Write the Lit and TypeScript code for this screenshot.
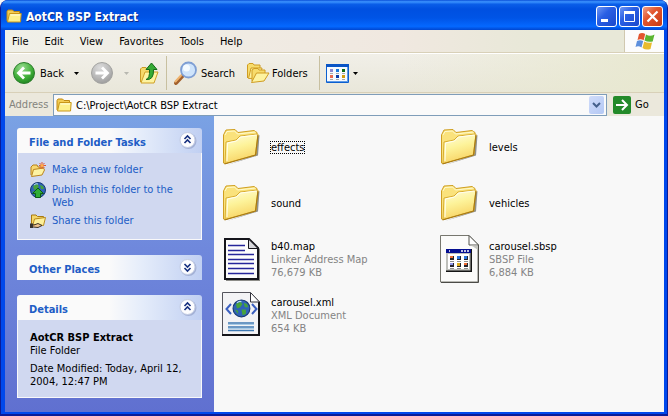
import { LitElement, html, svg, css, nothing } from "lit";
import { customElement, property } from "lit/decorators.js";
import { classMap } from "lit/directives/class-map.js";

type Entry = { name: string; icon: string; lines: string[]; focused?: boolean };

const entries: Entry[] = [
  { name: "effects", icon: "folder", lines: [], focused: true },
  { name: "levels", icon: "folder", lines: [] },
  { name: "sound", icon: "folder", lines: [] },
  { name: "vehicles", icon: "folder", lines: [] },
  { name: "b40.map", icon: "map", lines: ["Linker Address Map", "76,679 KB"] },
  { name: "carousel.sbsp", icon: "program", lines: ["SBSP File", "6,884 KB"] },
  { name: "carousel.xml", icon: "xml", lines: ["XML Document", "654 KB"] },
];

const tasks = [
  { label: "Make a new folder", icon: "new" },
  { label: "Publish this folder to the Web", icon: "publish" },
  { label: "Share this folder", icon: "share" },
];

const menus = ["File", "Edit", "View", "Favorites", "Tools", "Help"];

const folder = html`<svg width="40" height="40" viewBox="0 0 40 40" aria-hidden="true">
  <defs>
    <linearGradient id="f" x1="0" y1="0" x2="0.3" y2="1">
      <stop offset="0" stop-color="#fffde0" /><stop offset="0.5" stop-color="#fdf39a" /><stop offset="1" stop-color="#f8d465" />
    </linearGradient>
  </defs>
  <path d="M5 38 L36 28.500 L37.500 8 L35 10 L34 28 Z" fill="#77776f" opacity=".8" />
  <path d="M1.500 36 L1.500 8 L4 3 L13 2.500 L16 5.500 L32 3.500 L35 5.500 L34 27 L3 36.500 Z" fill="#fae27c" stroke="#cf9f22" />
  <path d="M3 8 L5 4.500 L12.500 4 L15.500 7 L33.500 5" fill="none" stroke="#fffbd0" />
  <path d="M3 36.500 L4 15 L14 13 L18 9 L36 7 L33.500 28 Z" fill="url(#f)" stroke="#d9ad30" />
  <path d="M5 34 L5.500 16 L14.500 14 L18.500 10 L34.500 8" fill="none" stroke="#fffef0" />
  <path d="M2.500 37 L33.500 28 L36 8" fill="none" stroke="#a87a14" stroke-width="1.200" />
</svg>`;

const smallFolder = html`<svg width="16" height="16" viewBox="0 0 16 16" aria-hidden="true">
  <path d="M1 13 V3.500 L2 2 H6.500 L8 3.500 H13.500 V6" fill="#f3cc52" stroke="#c08a12" />
  <path d="M1.500 14 L3.500 5.500 H15.200 L14.500 14 Z" fill="#fdf08c" stroke="#c99618" />
  <path d="M4.500 7 H14" stroke="#fffde0" />
</svg>`;

const globe = svg`
  <circle cx="8" cy="8" r="7.500" fill="#2f62b8" stroke="#173a72" />
  <path d="M3 4 L7 2 L9 4 L7 7 L4 8 Z M10 3 L13 4 L14 7 L11 7 Z M8 9 L12 9 L12 13 L9 14 Z M2 9 L5 10 L5 13 Z" fill="#47a33c" />
  <path d="M4 3 Q6 1 8 2" stroke="#b7dcf5" fill="none" />`;

const taskIcons: Record<string, unknown> = {
  new: html`<svg width="16" height="16" viewBox="0 0 16 16" aria-hidden="true">
    <path d="M1 13 V5 L3 3 H7 L8 5 H13 V8" fill="#f7d871" stroke="#b98218" />
    <path d="M1.500 14.500 L3.500 7.500 L13.500 6 L14.500 8 L12 13 Z" fill="#fdf3a3" stroke="#ba8420" />
    <path d="M12 0 V7 M9 3.500 H16 M9.500 1 L14.500 6 M14.500 1 L9.500 6" stroke="#e2572f" />
    <circle cx="12" cy="3.500" r="1.500" fill="#ffb04a" />
  </svg>`,
  publish: html`<svg width="16" height="16" viewBox="0 0 16 16" aria-hidden="true">
    ${globe}
    <path d="M8 6 L13.500 11.500 H10.500 V15.500 H5.500 V11.500 H2.500 Z" fill="#2fae35" stroke="#0d5b17" />
  </svg>`,
  share: html`<svg width="16" height="16" viewBox="0 0 16 16" aria-hidden="true">
    <path d="M1.500 11 V2 H6 L7.500 3.500 H13.500 V6" fill="#f5d76a" stroke="#a8790f" />
    <path d="M3 11.500 L4.500 6 L15.500 4.500 L13.500 12.500 Z" fill="#fdf09a" stroke="#b98a1c" />
    <path d="M0 12 H4 L8 10.500 L12 12.500 L8 14.500 L3 14 H0 Z" fill="#f0c48e" stroke="#3c3325" />
    <path d="M0 10.500 H3 V15 H0 Z" fill="#37332e" />
  </svg>`,
};

const fileIcons: Record<string, unknown> = {
  folder,
  map: html`<svg width="40" height="48" viewBox="0 0 40 48" aria-hidden="true">
    <path d="M4 6 H30 L38 14 V46 H4 Z" fill="#8c8c88" />
    <path d="M3 4 H27 L36 13 V44 H3 Z" fill="#fcfcfc" stroke="#15151c" stroke-width="2" />
    <path d="M26.500 4 V13.500 H36 Z" fill="#d8d8dc" stroke="#15151c" />
    <path d="M6 10.500 H23 M6 15.500 H23 M6 19.500 H32 M6 24.500 H32 M6 28.500 H32 M6 33.500 H32 M6 38.500 H32" stroke="#26269a" stroke-width="1.500" />
  </svg>`,
  program: html`<svg width="40" height="48" viewBox="0 0 40 48" aria-hidden="true">
    <path d="M.5 .5 H29 L38 9.500 V47 H.5 Z" fill="#fbfbfa" stroke="#77776f" />
    <path d="M1 47.500 H38.500 V10" fill="none" stroke="#4b4b47" />
    <path d="M29 .5 L38.500 10 H29 Z" fill="#fff" stroke="#54544f" />
    <path d="M30 10.500 H38 V15 L33 11.500 Z" fill="#c5c5c0" />
    <path d="M6 14 H32 V37 H6 Z" fill="#151515" />
    <path d="M6 14 H30.500 V35.500 H6 Z" fill="#bfc0bb" />
    <path d="M6 14 H31 V18 H6 Z" fill="#050f91" />
    <path d="M8 19 H29 V34 H8 Z" fill="#fff" />
    <path d="M9 16 h1 M21 16 h2 M24 16 h2 M27 16 h2" stroke="#fff" stroke-width="1.500" />
    <path d="M10 21 h4 v4 h-4z M17 21 h4 v4 h-4z M24 21 h4 v4 h-4z M10 28 h4 v4 h-4z M17 28 h4 v4 h-4z M24 28 h4 v4 h-4z" fill="#24242c" />
    <path d="M10 21 h3 v2 h-3z M24 28 h3 v2 h-3z" fill="#ed6a32" />
    <path d="M17 21 h3 v3 h-3z M24 21 h3 v3 h-3z" fill="#2c74d9" />
    <path d="M10 28 h3 v2 h-3z" fill="#8d94e8" />
    <path d="M17 28 h3 v3 h-3z" fill="#dfae20" />
    <path d="M10 26.500 h4 M17 26.500 h4 M24 26.500 h4 M10 33.500 h4 M17 33.500 h4 M24 33.500 h4" stroke="#8e8e8e" />
  </svg>`,
  xml: html`<svg width="40" height="48" viewBox="0 0 40 48" aria-hidden="true">
    <path d="M.5 1.500 H28 L37.500 11 V44 H.5 Z" fill="#f3f3f5" stroke="#54545c" />
    <path d="M0 44 H37 V11" fill="none" stroke="#15151a" stroke-width="2" />
    <path d="M28.500 1.500 V11 H37.500 Z" fill="#fff" stroke="#33333b" />
    <path d="M9 13 L4.500 18 L9 23 M30 13 L34.500 18 L30 23" fill="none" stroke="#3a5fc0" stroke-width="2" />
    <g transform="translate(10.500 8.500) scale(1.120)">${globe}</g>
    <path d="M6 32 H32 M6 36 H32 M6 39.500 H32" stroke="#3f79b3" stroke-width="1.500" />
    <path d="M6 33.500 H32 M6 37.500 H32" stroke="#a7cbe6" />
  </svg>`,
};

const backIcon = html`<svg width="24" height="24" viewBox="0 0 24 24" aria-hidden="true">
  <defs><radialGradient id="back" cx=".4" cy=".25" r=".8">
    <stop offset="0" stop-color="#98dc90" /><stop offset=".6" stop-color="#42b03a" /><stop offset="1" stop-color="#1d821f" />
  </radialGradient></defs>
  <circle cx="12" cy="12" r="10.500" fill="url(#back)" stroke="#2c7d2c" />
  <path d="M18.500 12 H7 M12 6.500 L6.500 12 L12 17.500" fill="none" stroke="#fff" stroke-width="2.800" />
</svg>`;

const forwardIcon = html`<svg width="24" height="24" viewBox="0 0 24 24" aria-hidden="true">
  <defs><radialGradient id="forward" cx=".4" cy=".25" r=".8">
    <stop offset="0" stop-color="#dcdcdc" /><stop offset=".6" stop-color="#b8b8b8" /><stop offset="1" stop-color="#9a9a9a" />
  </radialGradient></defs>
  <circle cx="12" cy="12" r="10.500" fill="url(#forward)" stroke="#a3a3a0" />
  <path d="M5.500 12 H17 M12 6.500 L17.500 12 L12 17.500" fill="none" stroke="#fff" stroke-width="2.800" />
</svg>`;

const upIcon = html`<svg width="20" height="24" viewBox="2 0 20 24" aria-hidden="true">
  <path d="M2.500 21 V8 L4 6.500 H8 L9 8 H15 V10" fill="#f6d96b" stroke="#c99a24" />
  <path d="M3 22 L7 11 H20 L16 22 Z" fill="#fdf3a0" stroke="#d0a027" />
  <path d="M8 18.500 Q12 17.500 11.500 8.500 H8 L13.500 2 L19 8.500 H15.500 Q16 19.500 8 18.500 Z" fill="#36ab35" stroke="#156b1a" />
</svg>`;

const searchIcon = html`<svg width="26" height="26" viewBox="0 0 26 26" aria-hidden="true">
  <path d="M3 23 L9.500 16" stroke="#a2602c" stroke-width="4" stroke-linecap="round" />
  <path d="M2.500 21.500 L8 15.500" stroke="#efb36e" stroke-width="2" stroke-linecap="round" />
  <circle cx="15.500" cy="10" r="7.500" fill="#cfe4fb" stroke="#7f9fd4" stroke-width="1.800" />
  <circle cx="13.500" cy="8" r="3.500" fill="#f5fbff" />
</svg>`;

const foldersIcon = html`<svg width="24" height="22" viewBox="0 0 24 22" aria-hidden="true">
  <path d="M1.500 16 V3 L3 1.500 H7 L8 3 H14 V8" fill="#f7dc6c" stroke="#cf9c22" />
  <path d="M2.500 16.500 L5 6 H16 L14 16 Z" fill="#fdf3a0" stroke="#cf9c22" />
  <path d="M6 19 V8 L8 6.500 H12 L13 8 H19 V12" fill="#f7dc6c" stroke="#cf9c22" />
  <path d="M5.500 20.500 L10.500 11 H23 L18 19 Z" fill="#fdf3a0" stroke="#cf9c22" />
</svg>`;

const viewsIcon = html`<svg width="23" height="19" viewBox="0 0 23 19" aria-hidden="true">
  <path d="M.5 .5 H22.500 V18.500 H.5 Z" fill="#f6faff" stroke="#0b5fd0" />
  <path d="M1 17.500 H22 M21.500 3 V18" stroke="#5f9ae6" />
  <path d="M0 0 H23 V3 H0 Z" fill="#0a55c6" />
  <path d="M4 5 h3 v3 h-3z" fill="#8c88cf" /><path d="M10 5 h3 v3 h-3z" fill="#1878dc" /><path d="M16 5 h3 v3 h-3z" fill="#0d6a18" />
  <path d="M4 11 h3 v3 h-3z" fill="#ea6a50" /><path d="M10 11 h3 v3 h-3z" fill="#0b3ba8" /><path d="M16 11 h3 v3 h-3z" fill="#d19c10" />
  <path d="M4 9.500 h3 M10 9.500 h3 M16 9.500 h3 M4 15.500 h3 M10 15.500 h3 M16 15.500 h3" stroke="#a8a8ac" />
</svg>`;

const caret = html`<svg width="5" height="3" viewBox="0 0 5 3" aria-hidden="true"><path d="M0 0 H5 L2.500 3 Z" fill="currentColor" /></svg>`;

const flag = html`<svg width="20" height="20" viewBox="0 0 20 20" aria-hidden="true">
  <path d="M4 3 Q7 1 10.200 3 L8.700 9.200 Q5.500 7.500 2.500 9 Z" fill="#e2552f" />
  <path d="M11 3.500 Q15 6 19.500 3.500 L17.700 10.500 Q13 11.500 9.500 9.500 Z" fill="#5bb531" />
  <path d="M2 10 Q5 8.500 8.200 10 L6.500 16.500 Q3.500 14.500 .5 16 Z" fill="#5d8fdc" />
  <path d="M9.200 10.500 Q13 12.500 17 11.500 L15.500 18 Q11 19.500 7.500 17 Z" fill="#e9bb2c" />
</svg>`;

@customElement("task-panel")
export class TaskPanel extends LitElement {
  @property() heading = "";
  @property({ type: Boolean }) open = false;

  static styles = css`
    :host { display: block; }
    .head {
      display: flex; align-items: center; justify-content: space-between; width: 100%; height: 25px;
      padding: 0 4px 0 12px; border: 0; border-radius: 3px 3px 0 0; color: #215dc6; text-align: left;
      font: bold 11px/13px "DejaVu Sans Condensed", "Noto Sans", sans-serif;
      background: linear-gradient(90deg, #fafafa 50%, #e4ecfa 68%, #c0cff2);
    }
    .head span { padding-top: 3px; }
    .body { background: #d0d8f0; border: 1px solid #f8f8fa; border-top: 0; }
  `;

  render() {
    return html`
      <button class="head" aria-expanded=${this.open ? "true" : "false"}>
        <span>${this.heading}</span>
        <svg width="20" height="20" viewBox="0 0 20 20" aria-hidden="true">
          <circle cx="10.500" cy="10" r="8" fill="#a4b1d6" />
          <circle cx="9.500" cy="9" r="7.500" fill="#fdfdff" stroke="#c3cce2" />
          <path d=${this.open ? "M6.500 8 L9.500 5 L12.500 8 M6.500 12 L9.500 9 L12.500 12" : "M6.500 6 L9.500 9 L12.500 6 M6.500 10 L9.500 13 L12.500 10"}
            fill="none" stroke="#16307f" stroke-width="1.600" />
        </svg>
      </button>
      ${this.open ? html`<div class="body"><slot></slot></div>` : nothing}
    `;
  }
}

@customElement("app-root")
export class AppRoot extends LitElement {
  static styles = css`
    :host { display: block; background: #f8f8f8; }
    * { box-sizing: border-box; }
    button { border: 0; padding: 0; background: none; color: inherit; font: inherit; }
    svg { display: block; flex: none; }
    .window {
      display: flex; flex-direction: column; min-height: 100vh; overflow: hidden;
      border: solid #0a1c98; border-width: 0 1px 2px; border-radius: 8px 8px 0 0; color: #000;
      font: 11px/13px "DejaVu Sans Condensed", "Noto Sans", sans-serif; background: #0048ec;
    }
    .title {
      display: flex; align-items: center; gap: 4px; height: 30px; padding: 2px 4px 0 5px;
      background: linear-gradient(#0a4fd8, #3c94ff 6%, #0a5ee8 14%, #0050e0 30%, #0054e6 60%, #0468ff 88%, #0046d0);
    }
    h1 { flex: 1; margin: 0; padding-top: 1px; color: #fff; font: bold 12px/18px "DejaVu Sans Condensed", "Noto Sans", sans-serif; text-shadow: 1px 1px #0a2a88; }
    .controls { display: flex; gap: 2px; }
    .control {
      display: grid; place-items: center; width: 21px; height: 21px; border: 1px solid #fff; border-radius: 3px;
      background: linear-gradient(135deg, #6f97f4, #2a5fe4 40%, #1a48cc);
    }
    .control.close { background: linear-gradient(135deg, #f0a088, #e2562e 40%, #c73a14); }
    .frame { flex: 1; display: flex; flex-direction: column; margin: 0 3px 2px 4px; }
    .menubar { display: flex; height: 23px; border-bottom: 1px solid #d8d0b8; background: linear-gradient(90deg, #f0f0e8, #f0e8e0 60%, #e8e8d8 80%); }
    .menus { flex: 1; display: flex; align-items: center; gap: 16px; padding-left: 7px; }
    .brand { display: grid; place-items: center; width: 40px; border-left: 1px solid #d0c8b0; background: #fcfcfc; }
    .toolbar {
      display: flex; align-items: center; height: 40px; padding-left: 7px; border-top: 1px solid #fff; border-bottom: 1px solid #d8d0b8;
      background: linear-gradient(90deg, transparent 60%, #e8e8d0), linear-gradient(#f1efe8, #e9e7da);
    }
    .tool { display: flex; align-items: center; gap: 2px; margin-right: 11px; }
    .tool.nav { gap: 10px; }
    .tool.up { margin-right: 6px; }
    .tool.views { gap: 4px; }
    .pair { display: flex; align-items: center; gap: 4px; }
    .off { color: #b8b8b0; }
    .rule { width: 1px; height: 34px; margin-right: 6px; background: #c8c0a0; }
    .address { display: flex; align-items: center; height: 23px; background: #ebe8dc; }
    .address label { width: 48px; padding-left: 4px; color: #84847c; }
    .field { flex: 1; display: flex; align-items: center; gap: 4px; height: 22px; padding: 0 2px; border: 1px solid #7f9db9; background: #fafafa; }
    .field input { flex: 1; min-width: 0; border: 0; padding: 2px 0 0; outline: 0; color: #000; font: inherit; background: none; }
    .drop { display: grid; place-items: center; width: 15px; height: 18px; border-radius: 2px; background: linear-gradient(135deg, #d0dcfa, #b4c8f4); }
    .go { display: flex; align-items: center; gap: 4px; width: 57px; padding-left: 6px; }
    .main { flex: 1; display: flex; }
    .side { flex: none; display: flex; flex-direction: column; gap: 15px; width: 209px; padding: 12px 12px 14px; background: linear-gradient(#7aa2e4, #6f88dc 45%, #6070d0); }
    .tasks { display: flex; flex-direction: column; gap: 4px; margin: 0; padding: 9px 12px 10px; list-style: none; }
    .tasks a { display: flex; gap: 6px; min-height: 16px; color: #215dc6; text-decoration: none; }
    .tasks span { padding-top: 1px; }
    .details { padding: 11px 12px 9px; }
    .details p { margin: 0; }
    .details .date { margin-top: 5px; }
    .files { flex: 1; display: grid; grid-template-columns: repeat(auto-fill, 218px); grid-auto-rows: 56px; align-content: start; margin: 0; padding: 3px 0 0 8px; list-style: none; background: #f8f8f8; }
    .file { display: flex; align-items: center; gap: 8px; }
    .name { display: inline-block; padding: 0 1px; }
    .name.focused { outline: 1px dotted #000; outline-offset: -1px; }
    .meta { padding: 0 1px; color: #848484; }
  `;

  render() {
    return html`
      <div class="window">
        <header class="title">
          ${smallFolder}
          <h1>AotCR BSP Extract</h1>
          <div class="controls">
            <button class="control" aria-label="Minimize"><svg width="13" height="13" viewBox="0 0 13 13"><path d="M1 9 H8 V12 H1 Z" fill="#fff" /></svg></button>
            <button class="control" aria-label="Maximize"><svg width="13" height="13" viewBox="0 0 13 13"><path d="M1.500 2 V11.500 H11.500 V2" fill="none" stroke="#fff" /><path d="M1 1 H12 V4 H1 Z" fill="#fff" /></svg></button>
            <button class="control close" aria-label="Close"><svg width="13" height="13" viewBox="0 0 13 13"><path d="M1.500 1.500 L11.500 11.500 M11.500 1.500 L1.500 11.500" stroke="#fff" stroke-width="2.200" /></svg></button>
          </div>
        </header>
        <div class="frame">
          <div class="menubar">
            <nav class="menus">${menus.map((m) => html`<button>${m}</button>`)}</nav>
            <div class="brand">${flag}</div>
          </div>
          <div class="toolbar">
            <div class="tool nav"><button class="pair">${backIcon}Back</button>${caret}</div>
            <div class="tool nav off"><button class="pair" aria-label="Forward" disabled>${forwardIcon}</button>${caret}</div>
            <button class="tool up" aria-label="Up">${upIcon}</button>
            <div class="rule"></div>
            <button class="tool">${searchIcon}Search</button>
            <button class="tool">${foldersIcon}Folders</button>
            <div class="rule"></div>
            <button class="tool views" aria-label="Views">${viewsIcon}${caret}</button>
          </div>
          <div class="address">
            <label for="path">Address</label>
            <div class="field">
              ${smallFolder}
              <input id="path" type="text" value="C:\\Project\\AotCR BSP Extract" />
              <button class="drop" aria-label="Show addresses"><svg width="9" height="6" viewBox="0 0 9 6"><path d="M1 1 L4.500 4.500 L8 1" fill="none" stroke="#45608c" stroke-width="2" /></svg></button>
            </div>
            <button class="go"><svg width="18" height="18" viewBox="0 0 18 18"><rect width="18" height="18" rx="2" fill="#238a2a" /><path d="M3 9 H14 M9 4 L14 9 L9 14" fill="none" stroke="#fff" stroke-width="2" /></svg>Go</button>
          </div>
          <main class="main">
            <aside class="side">
              <task-panel heading="File and Folder Tasks" open>
                <ul class="tasks">${tasks.map((t) => html`<li><a href="#">${taskIcons[t.icon]}<span>${t.label}</span></a></li>`)}</ul>
              </task-panel>
              <task-panel heading="Other Places"></task-panel>
              <task-panel heading="Details" open>
                <div class="details">
                  <p><strong>AotCR BSP Extract</strong></p>
                  <p>File Folder</p>
                  <p class="date">Date Modified: Today, April 12, 2004, 12:47 PM</p>
                </div>
              </task-panel>
            </aside>
            <ul class="files">
              ${entries.map((e) => html`<li class="file">
                ${fileIcons[e.icon]}
                <div>
                  <div class=${classMap({ name: true, focused: !!e.focused })}>${e.name}</div>
                  ${e.lines.map((l) => html`<div class="meta">${l}</div>`)}
                </div>
              </li>`)}
            </ul>
          </main>
        </div>
      </div>
    `;
  }
}
